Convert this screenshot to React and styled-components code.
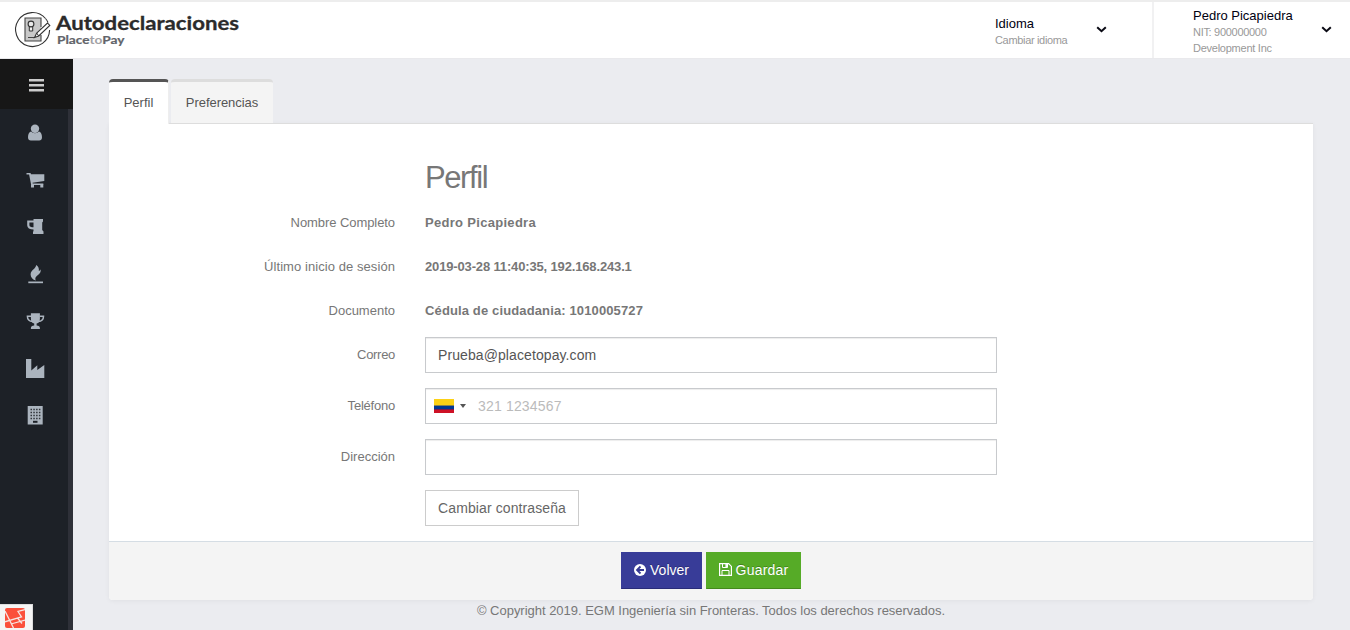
import React from 'react';
import styled, { createGlobalStyle } from 'styled-components';

const GlobalStyle = createGlobalStyle`
  * { box-sizing: border-box; }
  body {
    margin: 0;
    background: #ebecf0;
    color: #777;
    font-family: "Liberation Sans", Arial, sans-serif;
    font-size: 13px;
    overflow: hidden;
  }
`;

const Page = styled.div`
  display: flex;
  flex-direction: column;
  height: 630px;
`;

const Header = styled.header`
  display: flex;
  flex: none;
  height: 59px;
  border-top: 2px solid #ededed;
  border-bottom: 1px solid #e9e9ec;
  background: #fff;
`;

const Brand = styled.div`
  flex: 1;
  padding: 5px 0 0 12px;
  svg { display: block; }
`;

const HeaderMenu = styled.div`
  display: flex;
  align-items: flex-start;
  justify-content: space-between;
  width: ${(p) => p.$width}px;
  padding: ${(p) => p.$pad};
  border-left: ${(p) => (p.$divided ? '2px solid #f1f1f2' : 'none')};
`;

const MenuTitle = styled.div`
  color: #000011;
  font-size: 13px;
  line-height: 17px;
  letter-spacing: ${(p) => p.$spacing || 0}px;
`;

const MenuNote = styled.div`
  color: #999;
  font-size: 11px;
  line-height: 16px;
  letter-spacing: ${(p) => p.$spacing || 0}px;
`;

const Chevron = styled.svg`
  display: block;
  width: 11px;
  height: 7px;
  margin-top: ${(p) => p.$top}px;
`;

const Body = styled.div`
  display: flex;
  flex: 1;
  min-height: 0;
`;

const Sidebar = styled.aside`
  display: flex;
  flex-direction: column;
  flex: none;
  width: 73px;
  background: #1d2127;
`;

const MenuToggle = styled.button`
  display: flex;
  align-items: center;
  justify-content: center;
  height: 50px;
  padding: 2px 0 0;
  border: 0;
  background: #171717;
`;

const Nav = styled.nav`
  display: flex;
  flex: 1;
  flex-direction: column;
  border-right: 5px solid #2e3038;
`;

const NavItem = styled.a`
  display: flex;
  align-items: center;
  justify-content: center;
  height: 47.1px;
  padding-left: 1px;
  color: #abb4be;
`;

const DebugBadge = styled.div`
  display: flex;
  align-items: flex-start;
  width: 33px;
  height: 26px;
  margin-top: auto;
  padding: 3px 0 0 5px;
  border: 1px solid #ddd;
  border-width: 1px 1px 0 0;
  background: #f5f5f5;
`;

const Main = styled.main`
  flex: 1;
  padding: 20px 36px 0;
`;

const Tabs = styled.div`
  display: flex;
  align-items: flex-end;
  gap: 2px;
  height: 44px;
`;

const Tab = styled.button`
  height: ${(p) => (p.$active ? 45 : 44)}px;
  width: ${(p) => p.$width}px;
  margin-bottom: ${(p) => (p.$active ? -1 : 0)}px;
  position: relative;
  padding: 0 0 1px;
  border: 0;
  border-top: 3px solid ${(p) => (p.$active ? '#555' : '#ddd')};
  border-right: ${(p) => (p.$active ? '1px solid #eee' : '0')};
  border-radius: 4px 4px 0 0;
  background: ${(p) => (p.$active ? '#fff' : '#f4f4f4')};
  color: #555;
  font: 13px "Liberation Sans", Arial, sans-serif;
  letter-spacing: ${(p) => p.$spacing || 0}px;
`;

const Panel = styled.form`
  width: 1204px;
  height: 477px;
  border-top: 1px solid #ddd;
  border-radius: 0 0 4px 4px;
  background: #fff;
  box-shadow: 0 1px 5px rgba(0, 0, 0, 0.05);
`;

const Fields = styled.div`
  height: 417px;
  padding-top: 32px;
`;

const Title = styled.h2`
  margin: 0 0 6px 316px;
  color: #777;
  font-size: 31px;
  font-weight: 400;
  line-height: 43px;
  letter-spacing: -1.4px;
`;

const Row = styled.div`
  display: flex;
  height: ${(p) => (p.$input ? 51 : 44)}px;
`;

const Label = styled.label`
  width: 286px;
  margin-right: 30px;
  padding-top: 7px;
  text-align: right;
  line-height: 21px;
  letter-spacing: ${(p) => p.$spacing || 0}px;
`;

const Value = styled.strong`
  padding-top: 7px;
  line-height: 21px;
  letter-spacing: ${(p) => p.$spacing || 0}px;
`;

const InputBox = styled.div`
  display: flex;
  align-items: center;
  width: 572px;
  height: 36px;
  padding: 0 12px 0 ${(p) => (p.$phone ? 8 : 12)}px;
  border: 1px solid #c8cacd;
  box-shadow: inset 0 1px 1px rgba(0, 0, 0, 0.075);
`;

const Input = styled.input`
  flex: 1;
  min-width: 0;
  padding: 0;
  border: 0;
  outline: 0;
  background: transparent;
  color: #555;
  font: 14px "Liberation Sans", Arial, sans-serif;
  letter-spacing: ${(p) => p.$spacing || 0}px;
  &::placeholder { color: #bbb; opacity: 1; }
`;

const Flag = styled.span`
  width: 20px;
  height: 14px;
  margin-right: 6px;
  background: linear-gradient(#fcd116 0 6px, #8a8550 6px 7px, #003893 7px 10px, #7a1b4c 10px 11px, #ce1126 11px);
`;

const Caret = styled.span`
  margin-right: 12px;
  border: 3px solid transparent;
  border-top: 4px solid #555;
  border-bottom: 0;
`;

const PasswordButton = styled.button`
  width: 154px;
  height: 36px;
  margin-left: 316px;
  padding: 0;
  border: 1px solid #ccc;
  background: #fff;
  color: #666;
  font: 14px "Liberation Sans", Arial, sans-serif;
  letter-spacing: ${(p) => p.$spacing || 0}px;
`;

const Actions = styled.div`
  display: flex;
  justify-content: center;
  gap: 4px;
  height: 59px;
  padding-top: 10px;
  border-top: 1px solid #d5dde4;
  border-radius: 0 0 4px 4px;
  background: #f4f4f4;
`;

const ActionButton = styled.button`
  display: flex;
  align-items: center;
  justify-content: center;
  gap: ${(p) => p.$gap}px;
  width: ${(p) => p.$width}px;
  height: 37px;
  padding: 0 0 2px;
  border: 1px solid ${(p) => p.$color};
  border-bottom-color: ${(p) => p.$edge};
  background: ${(p) => p.$color};
  color: #fff;
  font: 14px "Liberation Sans", Arial, sans-serif;
  letter-spacing: ${(p) => p.$spacing || 0}px;
  text-shadow: 0 -1px 0 rgba(0, 0, 0, 0.25);
`;

const Copyright = styled.footer`
  padding: 1px 1px 0 0;
  text-align: center;
  line-height: 20px;
  letter-spacing: ${(p) => p.$spacing || 0}px;
`;

const Logo = () => (
  <svg width="240" height="46" viewBox="12 7 240 46">
    <path d="M45.500 18.500A17 17 0 1 0 49.600 30" fill="none" stroke="#333" strokeWidth="1.100" />
    <path d="M45.500 18.500A17 17 0 0 1 48 22.500" fill="none" stroke="#333" strokeWidth="1.100" />
    <path d="M41 27V18H25v23h16v-6" fill="#c9c9c9" stroke="#444" strokeWidth="1.1" />
    <path d="M29.300 26v5h3.400v-5" fill="#eee" stroke="#333" />
    <circle cx="31" cy="24" r="2.900" fill="#e9e9e9" stroke="#333" strokeWidth="1.1" />
    <path d="M28 37.500h7" stroke="#444" />
    <path d="M34.500 37.500l2.200-4.500L47.500 23l2.300 2.500L38.700 36z" fill="#fff" stroke="#333" strokeWidth="1.100" />
    <path d="M36.700 33l2 3" stroke="#333" />
    <text x="56" y="30" fill="#2b2b2b" fontFamily="Lato, sans-serif" fontWeight="700" fontSize="19.500" textLength="183" lengthAdjust="spacingAndGlyphs" stroke="#2b2b2b" strokeWidth=".3">Autodeclaraciones</text>
    <text x="57" y="44" fill="#62646a" fontFamily="Lato, sans-serif" fontWeight="700" fontSize="11.800" textLength="67.500" lengthAdjust="spacingAndGlyphs" stroke="#62646a" strokeWidth=".2">Place<tspan fill="#a2a2a5" stroke="none">to</tspan>Pay</text>
  </svg>
);

const Down = ({ top }) => (
  <Chevron $top={top} viewBox="0 0 11 7">
    <path d="M1.200 1.200L5.500 5.200 9.800 1.200" fill="none" stroke="#0a0a14" strokeWidth="2" />
  </Chevron>
);

const icons = {
  user: <><circle cx="10" cy="5.800" r="4.200" /><path d="M6.200 8.500C4.300 8.900 3 10.700 3 14.200c0 2.200 1.200 3.300 2.800 3.300h8.400c1.600 0 2.800-1.100 2.800-3.300 0-3.500-1.300-5.300-3.200-5.700-2 2.200-5.600 2.200-7.600 0z" /></>,
  cart: <><path d="M1.500 3h4l.5 1.300h13.300v6.800L7.500 12.700l.2.800h10.600V15H6.200L4.100 4.500H1.500z" /><path d="M6 14.500h3v3H6zM15.300 14.500h3v3h-3z" /></>,
  mug: <><path d="M8.500 2H18v2.500l-.8 1v7.500l1.300 1.500V17H8v-2l.5-1z" /><path d="M9 4.500H3.300v3.700q0 3.100 5.700 3.100" fill="none" stroke="currentColor" strokeWidth="2.200" /></>,
  fire: <><path d="M11 1c.8 3-5.400 5-5.400 9.400 0 2.900 2.200 5 5.200 6.200-.9-1.800-.5-3.200 1-4.500 3.200-2.600 4.500-4.200 3.700-6.800-.4 1-1 1.500-1.700 1.700C14.300 4.400 13.300 2.300 11 1z" /><path d="M3.300 17.500H18v1.700H3.300z" /></>,
  trophy: <><path d="M5.900 2.300h9v5.200q0 4.500-3.300 5v2q3.300.3 3.300 2.500v1h-9v-1q0-2.200 3.300-2.500v-2q-3.300-.5-3.300-5z" /><path d="M6.200 5.200H2.400q0 5 5.300 5.300M14.700 5.200h3.800q0 5-5.300 5.300" fill="none" stroke="currentColor" strokeWidth="1.500" /></>,
  industry: <path d="M1 1h5.300v11.500l6-5.300v4.800l7-5v13H1z" />,
  building: <><path d="M2.700 1h15v18.500h-15z" /><path d="M5.500 4.500H16M5.500 7.500H16M5.500 10.500H16M5.500 13.500H16" fill="none" stroke="#30343a" strokeWidth="1.500" strokeDasharray="1.500 1.300" /><path d="M8 15.800h4.500v2H8z" fill="#1d2127" /></>,
};

const NavIcon = ({ name }) => (
  <svg width="20" height="20" viewBox="0 0 20 20" fill="currentColor">{icons[name]}</svg>
);

const BackIcon = () => (
  <svg width="12" height="12" viewBox="0 0 12 12">
    <circle cx="6" cy="6" r="6" fill="#fff" />
    <path d="M6.500 2.500L3 6l3.500 3.500M3.500 6H10" fill="none" stroke="#373a94" strokeWidth="1.800" />
  </svg>
);

const SaveIcon = () => (
  <svg width="13" height="13" viewBox="0 0 13 13" fill="none" stroke="#fff">
    <path d="M.6.6h9l2.800 2.800v9H.6z" strokeWidth="1.200" />
    <path d="M3.500.5v4h5v-4M3 12.500v-5h7v5" />
    <path d="M7.200 1v3" strokeWidth="1.500" />
  </svg>
);

export default function App() {
  return (
    <Page>
      <GlobalStyle />
      <Header>
        <Brand><Logo /></Brand>
        <HeaderMenu $width={157} $pad="13px 45px 0 0">
          <div>
            <MenuTitle>Idioma</MenuTitle>
            <MenuNote $spacing={-0.33}>Cambiar idioma</MenuNote>
          </div>
          <Down top={11} />
        </HeaderMenu>
        <HeaderMenu $width={198} $pad="5px 18px 0 39px" $divided>
          <div>
            <MenuTitle>Pedro Picapiedra</MenuTitle>
            <MenuNote $spacing={-0.3}>NIT: 900000000</MenuNote>
            <MenuNote $spacing={-0.25}>Development Inc</MenuNote>
          </div>
          <Down top={19} />
        </HeaderMenu>
      </Header>
      <Body>
        <Sidebar>
          <MenuToggle aria-label="Menú">
            <svg width="15" height="13" viewBox="0 0 15 13" fill="#ccc">
              <path d="M0 0h15v2.500H0zM0 5h15v2.500H0zM0 10h15v2.500H0z" />
            </svg>
          </MenuToggle>
          <Nav>
            {Object.keys(icons).map((name) => (
              <NavItem key={name}><NavIcon name={name} /></NavItem>
            ))}
            <DebugBadge>
              <svg width="20" height="20" viewBox="0 0 20 20">
                <rect width="20" height="20" rx="2" fill="#fb503b" />
                <path d="M0 3l8.500 17M0 13.800l16.500-5L13 3.500 20 1.500M6 16l14-4M12.500 10l4.500 5.500" fill="none" stroke="#f5e5e2" strokeWidth="1.300" />
              </svg>
            </DebugBadge>
          </Nav>
        </Sidebar>
        <Main>
          <Tabs>
            <Tab $active $width={60}>Perfil</Tab>
            <Tab $width={102} $spacing={-0.06}>Preferencias</Tab>
          </Tabs>
          <Panel onSubmit={(e) => e.preventDefault()}>
            <Fields>
              <Title>Perfil</Title>
              <Row><Label $spacing={-0.07}>Nombre Completo</Label><Value $spacing={0.3}>Pedro Picapiedra</Value></Row>
              <Row><Label $spacing={0.07}>Último inicio de sesión</Label><Value $spacing={-0.15}>2019-03-28 11:40:35, 192.168.243.1</Value></Row>
              <Row><Label>Documento</Label><Value $spacing={0.13}>Cédula de ciudadania: 1010005727</Value></Row>
              <Row $input>
                <Label $spacing={-0.3}>Correo</Label>
                <InputBox><Input $spacing={0.09} defaultValue="Prueba@placetopay.com" /></InputBox>
              </Row>
              <Row $input>
                <Label $spacing={-0.22}>Teléfono</Label>
                <InputBox $phone><Flag /><Caret /><Input $spacing={0.17} placeholder="321 1234567" /></InputBox>
              </Row>
              <Row $input>
                <Label>Dirección</Label>
                <InputBox><Input /></InputBox>
              </Row>
              <PasswordButton type="button" $spacing={0.1}>Cambiar contraseña</PasswordButton>
            </Fields>
            <Actions>
              <ActionButton type="button" $gap={4} $width={81} $color="#383c98" $edge="#292c78"><BackIcon />Volver</ActionButton>
              <ActionButton $gap={4} $spacing={0.2} $width={95} $color="#56ab27" $edge="#43891c"><SaveIcon />Guardar</ActionButton>
            </Actions>
          </Panel>
          <Copyright $spacing={-0.02}>© Copyright 2019. EGM Ingeniería sin Fronteras. Todos los derechos reservados.</Copyright>
        </Main>
      </Body>
    </Page>
  );
}
